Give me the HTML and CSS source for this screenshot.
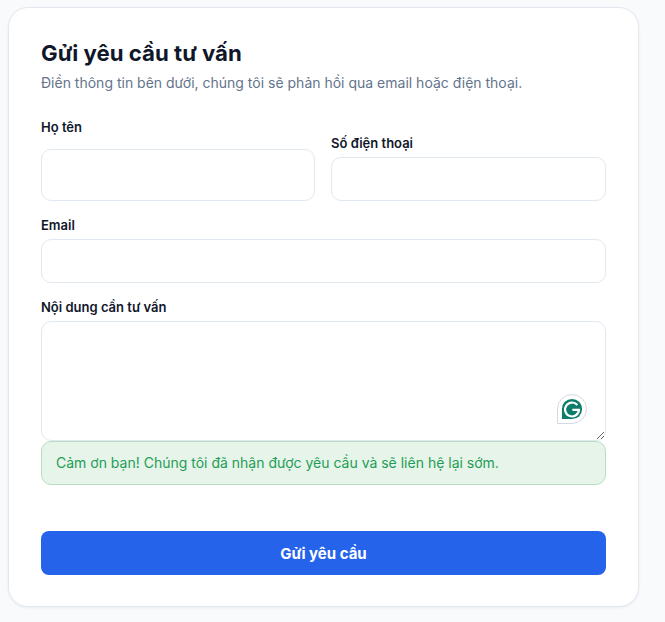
FILE: index.html
```html
<!DOCTYPE html>
<html lang="vi">
<head>
    <meta charset="UTF-8">
    <meta name="viewport" content="width=device-width, initial-scale=1.0">
    <title>Gửi yêu cầu tư vấn</title>
    <link rel="stylesheet" href="styles.css">
</head>
<body>
    <section class="card">
        <h1 class="card-title">Gửi yêu cầu tư vấn</h1>
        <p class="card-subtitle">Điền thông tin bên dưới, chúng tôi sẽ phản hồi qua email hoặc điện thoại.</p>

        <form class="form">
            <div class="form-row">
                <div class="field field-name">
                    <label for="name">Họ tên</label>
                    <input id="name" type="text">
                </div>
                <div class="field">
                    <label for="phone">Số điện thoại</label>
                    <input id="phone" type="tel">
                </div>
            </div>

            <div class="field">
                <label for="email">Email</label>
                <input id="email" type="email">
            </div>

            <div class="field field-message">
                <label for="message">Nội dung cần tư vấn</label>
                <div class="textarea-wrap">
                    <textarea id="message"></textarea>
                    <div class="grammarly">
                        <svg class="grammarly-icon" viewBox="0 0 24 24">
                            <path d="M12 1a11 11 0 1 1 0 22H1V12A11 11 0 0 1 12 1z" fill="#0b7d68"/>
                            <path d="M17.8 7.6A7.6 7.6 0 1 0 19.6 13H12.4" fill="none" stroke="#fff" stroke-width="2.4"/>
                        </svg>
                    </div>
                </div>
            </div>

            <div class="alert">Cảm ơn bạn! Chúng tôi đã nhận được yêu cầu và sẽ liên hệ lại sớm.</div>

            <button class="submit-btn" type="button">Gửi yêu cầu</button>
        </form>
    </section>
</body>
</html>
```

FILE: styles.css
```css
* {
    margin: 0;
    padding: 0;
    box-sizing: border-box;
}

body {
    font-family: Inter, "Noto Sans", sans-serif;
    background: #f8fafc;
    color: #0f172a;
    padding: 7px 26px 15px 8px;
}

.card {
    background: #ffffff;
    border: 1px solid #e2e8f0;
    border-radius: 20px;
    box-shadow: 0 1px 3px rgba(15, 23, 42, 0.06);
    height: 600px;
    padding: 32px;
}

.card-title {
    font-size: 22.2px;
    font-weight: 700;
    line-height: 26px;
    margin-bottom: 7px;
}

.card-subtitle {
    font-size: 14px;
    line-height: 20px;
    color: #64748b;
    margin-bottom: 24px;
}

.form-row {
    display: flex;
    gap: 16px;
    margin-bottom: 14px;
}

.form-row .field {
    flex: 1;
    justify-content: flex-end;
}

.form-row .field-name {
    flex: 0 0 274px;
}

.field {
    display: flex;
    flex-direction: column;
}

.field label {
    font-size: 13px;
    font-weight: 600;
    line-height: 20px;
    margin-bottom: 4px;
}

.field input,
.field textarea {
    display: block;
    width: 100%;
    height: 44px;
    border: 1px solid #e2e8f0;
    border-radius: 10px;
    background: #ffffff;
    font-family: inherit;
    font-size: 14px;
    padding: 0 12px;
}

.field-name label {
    margin-bottom: 12px;
}

.field-name input {
    height: 52px;
}

.form > .field {
    margin-bottom: 14px;
}

.form > .field-message {
    margin-bottom: 0;
}

.textarea-wrap {
    position: relative;
}

.field textarea {
    height: 120px;
    padding: 12px;
    resize: vertical;
}

.grammarly {
    position: absolute;
    right: 19px;
    bottom: 17px;
    width: 30px;
    height: 30px;
    padding: 3px;
    background: #ffffff;
    border: 1px solid #d5d9e2;
    border-radius: 50% 50% 50% 0;
}

.grammarly-icon {
    display: block;
    width: 22px;
    height: 22px;
}

.alert {
    height: 44px;
    background: #e6f4ea;
    border: 1px solid #b5dfc2;
    border-radius: 10px;
    color: #1f9d55;
    font-size: 14px;
    line-height: 42px;
    padding: 0 14px;
    margin-bottom: 46px;
}

.submit-btn {
    display: block;
    width: 100%;
    height: 44px;
    background: #2563eb;
    color: #ffffff;
    border: none;
    border-radius: 8px;
    font-family: inherit;
    font-size: 15px;
    font-weight: 700;
}
```
